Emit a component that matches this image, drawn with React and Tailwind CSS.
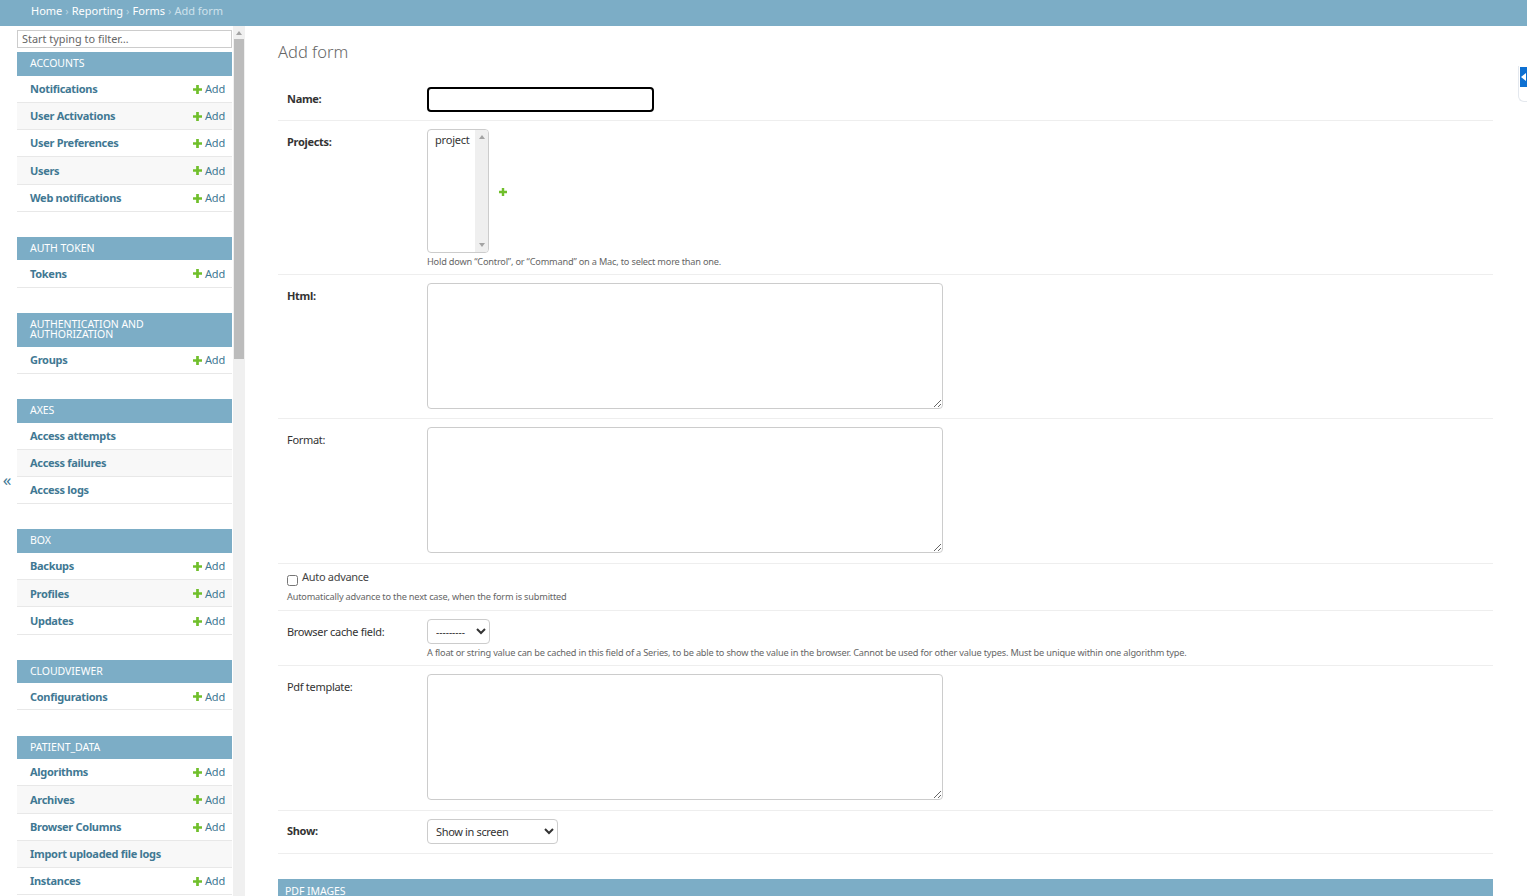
const sections = [
  { title: "ACCOUNTS", items: [["Notifications", 1], ["User Activations", 1], ["User Preferences", 1], ["Users", 1], ["Web notifications", 1]] },
  { title: "AUTH TOKEN", items: [["Tokens", 1]] },
  { title: "AUTHENTICATION AND AUTHORIZATION", items: [["Groups", 1]] },
  { title: "AXES", items: [["Access attempts", 0], ["Access failures", 0], ["Access logs", 0]] },
  { title: "BOX", items: [["Backups", 1], ["Profiles", 1], ["Updates", 1]] },
  { title: "CLOUDVIEWER", items: [["Configurations", 1]] },
  { title: "PATIENT_DATA", items: [["Algorithms", 1], ["Archives", 1], ["Browser Columns", 1], ["Import uploaded file logs", 0], ["Instances", 1]] },
];

function Plus({ className }) {
  return (
    <svg viewBox="0 0 10 10" className={className}>
      <path d="M3.5 0h3v3.5H10v3H6.5V10h-3V6.5H0v-3h3.5z" fill="#70bf2b" />
    </svg>
  );
}

function Section({ title, items }) {
  return (
    <div className="mb-[25.1px]">
      <div className="bg-[#7cadc6] text-white text-[10.5px] leading-[10.5px] px-[13px] pt-[6px] pb-[7px] tracking-[-0.05px]">{title}</div>
      {items.map(([name, add], i) => (
        <div key={name} className={`h-[27.25px] flex items-center justify-between pl-[13px] pr-[7px] pt-[1px] border-b border-[#e8e8e8] ${i % 2 ? "bg-[#f8f8f8]" : "bg-white"}`}>
          <span className="text-[#417893] font-bold text-[11px] tracking-[-0.3px]">{name}</span>
          {add ? (
            <span className="flex items-center gap-[3px] text-[#417893] text-[11px] tracking-[-0.2px]">
              <Plus className="w-[9px] h-[9px]" />
              Add
            </span>
          ) : null}
        </div>
      ))}
    </div>
  );
}

function Row({ label, bold, h, children, pt = "pt-[8px]", mt = "mt-[5px]" }) {
  return (
    <div className={`flex border-b border-[#eeeeee] px-[9px] ${pt} ${h}`}>
      <label className={`w-[140px] shrink-0 text-[11px] tracking-[-0.3px] text-[#333] leading-[16px] ${mt} ${bold ? "font-bold" : ""}`}>{label}</label>
      <div>{children}</div>
    </div>
  );
}

function Area() {
  return <textarea className="block w-[516px] h-[126px] border border-[#cccccc] rounded-[4px] bg-white" />;
}

function Help({ children }) {
  return <p className="text-[9.2px] leading-[12px] tracking-[-0.19px] text-[#666] mt-[3px] whitespace-nowrap">{children}</p>;
}

export default function App() {
  return (
    <div className="h-[896px] overflow-hidden bg-white relative text-[#333]" style={{ fontFamily: '"Noto Sans", sans-serif' }}>
      <div className="h-[26px] bg-[#7cadc6] flex items-center pl-[31px] text-[11px] text-white pb-[4px] gap-[3px]">
        <span>Home</span><span className="text-[#b8d4e2]">›</span>
        <span>Reporting</span><span className="text-[#b8d4e2]">›</span>
        <span>Forms</span><span className="text-[#b8d4e2]">›</span>
        <span className="text-[#cfe2ec]">Add form</span>
      </div>
      <div className="flex">
        <div className="w-[17px] shrink-0 flex items-center justify-center h-[870px]">
          <span className="text-[#417893] text-[17px] leading-none mt-[36px] -ml-[3px]">«</span>
        </div>
        <div className="w-[215px] shrink-0 h-[870px] overflow-hidden pt-[4px]">
          <input placeholder="Start typing to filter…" className="block w-full h-[18px] border border-[#cccccc] bg-white text-[10.9px] px-[4px] pb-[2px] mb-[4px] placeholder:text-[#666]" />
          {sections.map((s) => <Section key={s.title} {...s} />)}
        </div>
        <div className="ml-[1px] w-[12px] h-[870px] bg-[#f0f0f0] shrink-0 flex flex-col items-center">
          <div className="h-[13px] flex items-center justify-center">
            <div className="w-0 h-0 border-l-[3px] border-r-[3px] border-b-[4px] border-l-transparent border-r-transparent border-b-[#a3a3a3]" />
          </div>
          <div className="w-[10px] h-[320px] bg-[#bcbcbc]" />
        </div>
        <div className="ml-[33px] w-[1215px] shrink-0">
          <h1 className="text-[16.5px] font-light text-[#666] leading-[24px] mt-[14px] mb-[23px]">Add form</h1>

          <Row label="Name:" bold h="h-[34px]" pt="pt-0" mt="mt-[4px]">
            <input autoFocus className="block w-[227px] h-[25px] border-2 border-black rounded-[4px] bg-white outline-none" />
          </Row>
          <Row label="Projects:" bold h="h-[154px]">
            <div className="flex items-center gap-[10px]">
              <div className="w-[62px] h-[124px] border border-[#cccccc] rounded-[4px] flex justify-between overflow-hidden">
                <span className="text-[11px] tracking-[-0.2px] text-[#333] pl-[7px] pt-[2px]">project</span>
                <div className="w-[13px] bg-[#efefef] flex flex-col justify-between items-center py-[5px]">
                  <div className="w-0 h-0 border-l-[3px] border-r-[3px] border-b-[4px] border-l-transparent border-r-transparent border-b-[#a3a3a3]" />
                  <div className="w-0 h-0 border-l-[3px] border-r-[3px] border-t-[4px] border-l-transparent border-r-transparent border-t-[#a3a3a3]" />
                </div>
              </div>
              <Plus className="w-[8px] h-[8px] mt-[2px]" />
            </div>
            <Help>Hold down “Control”, or “Command” on a Mac, to select more than one.</Help>
          </Row>
          <Row label="Html:" bold h="h-[144px]"><Area /></Row>
          <Row label="Format:" h="h-[145px]"><Area /></Row>
          <div className="h-[47px] border-b border-[#eeeeee] px-[9px] pt-[6px]">
            <div className="flex items-center gap-[4px] h-[16px]">
              <input type="checkbox" className="w-[11px] h-[11px] m-0 mt-[4px]" />
              <span className="text-[11px] tracking-[-0.3px] text-[#444] -mt-[1px]">Auto advance</span>
            </div>
            <p className="text-[9.2px] leading-[12px] tracking-[-0.19px] text-[#666] mt-[5px]">Automatically advance to the next case, when the form is submitted</p>
          </div>
          <Row label="Browser cache field:" h="h-[55px]">
            <select className="block w-[63px] h-[25px] border border-[#cccccc] rounded-[4px] bg-white text-[10px] pl-[4px]">
              <option>---------</option>
            </select>
            <Help>A float or string value can be cached in this field of a Series, to be able to show the value in the browser. Cannot be used for other value types. Must be unique within one algorithm type.</Help>
          </Row>
          <Row label="Pdf template:" h="h-[145px]"><Area /></Row>
          <Row label="Show:" bold h="h-[43px]" mt="mt-[4px]">
            <select className="block w-[131px] h-[25px] border border-[#cccccc] rounded-[4px] bg-white text-[11px] tracking-[-0.35px] text-[#333] pl-[4px]">
              <option>Show in screen</option>
            </select>
          </Row>
          <div className="mt-[25px] h-[24px] bg-[#7cadc6] text-white text-[10.5px] px-[7px] pt-[5px] tracking-[-0.05px]">PDF IMAGES</div>
        </div>
      </div>
      <div className="absolute right-0 top-[66px] w-[9px] h-[36px] bg-white border border-r-0 border-t-0 border-[#e4e8ee] rounded-bl-[6px] pt-[1px]">
        <div className="ml-[1px] w-[7px] h-[20px] bg-[#0e70d1] overflow-hidden flex items-center">
          <div className="w-0 h-0 ml-[1px] border-t-[4px] border-b-[4px] border-r-[5px] border-t-transparent border-b-transparent border-r-white" />
        </div>
      </div>
    </div>
  );
}
